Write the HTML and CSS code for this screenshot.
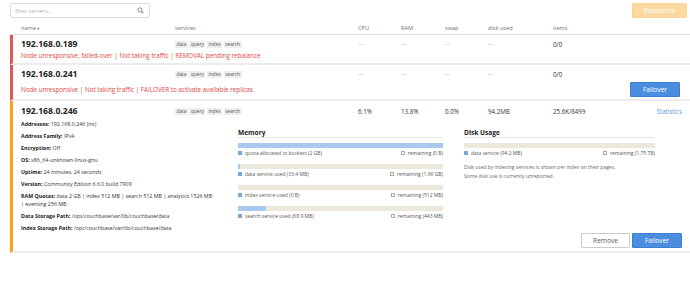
FILE: index.html
```html
<!DOCTYPE html>
<html>
<head>
<meta charset="utf-8">
<link rel="stylesheet" href="styles.css">
</head>
<body>
<div class="page">
  <div class="topbar">
    <div class="filter">
      <span class="ph">filter servers...</span>
      <svg class="search" width="7" height="7" viewBox="0 0 10 10"><circle cx="4.2" cy="4.2" r="3" fill="none" stroke="#888" stroke-width="1.4"/><line x1="6.4" y1="6.4" x2="9" y2="9" stroke="#888" stroke-width="1.6"/></svg>
    </div>
    <button class="btn rebalance">Rebalance</button>
  </div>

  <div class="thead grid">
    <span>name <span class="caret">&#9662;</span></span>
    <span>services</span>
    <span>CPU</span>
    <span>RAM</span>
    <span>swap</span>
    <span>disk used</span>
    <span>items</span>
    <span></span>
  </div>

  <div class="node failed">
    <div class="grid line1">
      <span class="ip">192.168.0.189</span>
      <span class="tags"><i>data</i><i>query</i><i>index</i><i>search</i></span>
      <span class="dash">---</span>
      <span class="dash">---</span>
      <span class="dash">---</span>
      <span class="dash">---</span>
      <span class="val">0/0</span>
      <span></span>
    </div>
    <div class="msg">Node unresponsive, failed-over | Not taking traffic | REMOVAL pending rebalance</div>
  </div>

  <div class="node failed">
    <div class="grid line1">
      <span class="ip">192.168.0.241</span>
      <span class="tags"><i>data</i><i>query</i><i>index</i><i>search</i></span>
      <span class="dash">---</span>
      <span class="dash">---</span>
      <span class="dash">---</span>
      <span class="dash">---</span>
      <span class="val">0/0</span>
      <span></span>
    </div>
    <div class="msgrow">
      <div class="msg">Node unresponsive | Not taking traffic | FAILOVER to activate available replicas</div>
      <button class="btn primary">Failover</button>
    </div>
  </div>

  <div class="node warn">
    <div class="grid line1">
      <span class="ip">192.168.0.246</span>
      <span class="tags"><i>data</i><i>query</i><i>index</i><i>search</i></span>
      <span class="val">6.1%</span>
      <span class="val">13.8%</span>
      <span class="val">0.0%</span>
      <span class="val">94.2MB</span>
      <span class="val">25.6K/8499</span>
      <span class="stats">Statistics</span>
    </div>
    <div class="panels">
      <div class="details">
        <p><b>Addresses:</b> 192.168.0.246 (int)</p>
        <p><b>Address Family:</b> IPv4</p>
        <p><b>Encryption:</b> Off</p>
        <p><b>OS:</b> x86_64-unknown-linux-gnu</p>
        <p><b>Uptime:</b> 24 minutes, 24 seconds</p>
        <p><b>Version:</b> Community Edition 6.6.0 build 7909</p>
        <p><b>RAM Quotas:</b> data 2 GB | index 512 MB | search 512 MB | analytics 1526 MB | eventing 256 MB</p>
        <p><b>Data Storage Path:</b> /opt/couchbase/var/lib/couchbase/data</p>
        <p><b>Index Storage Path:</b> /opt/couchbase/var/lib/couchbase/data</p>
      </div>
      <div class="usage">
        <h4>Memory</h4>
        <div class="bar"><div class="fill" style="width:100%"></div></div>
        <div class="legend"><span><i class="sq used"></i>quota allocated to buckets (2 GB)</span><span><i class="sq"></i>remaining (0 B)</span></div>
        <div class="bar"><div class="fill" style="width:0.8%"></div></div>
        <div class="legend"><span><i class="sq used"></i>data service used (33.4 MB)</span><span><i class="sq"></i>remaining (1.96 GB)</span></div>
        <div class="bar"><div class="fill" style="width:0%"></div></div>
        <div class="legend"><span><i class="sq used"></i>index service used (0 B)</span><span><i class="sq"></i>remaining (512 MB)</span></div>
        <div class="bar"><div class="fill" style="width:13.5%"></div></div>
        <div class="legend"><span><i class="sq used"></i>search service used (68.9 MB)</span><span><i class="sq"></i>remaining (443 MB)</span></div>
      </div>
      <div class="usage">
        <h4>Disk Usage</h4>
        <div class="bar"><div class="fill" style="width:0%"></div></div>
        <div class="legend"><span><i class="sq used"></i>data service (94.2 MB)</span><span><i class="sq"></i>remaining (1.75 TB)</span></div>
        <p class="note">Disk used by indexing services is shown per index on their pages.<br>Some disk use is currently unreported.</p>
      </div>
    </div>
    <div class="actions">
      <button class="btn plain">Remove</button>
      <button class="btn primary">Failover</button>
    </div>
  </div>
</div>
</body>
</html>
```

FILE: styles.css
```css
* { box-sizing: border-box; }
body {
  margin: 0;
  font-family: "Open Sans", "DejaVu Sans", sans-serif;
  color: #333;
  background: #fff;
}
.page { padding: 3px 0 0 10px; }

.topbar {
  display: flex;
  justify-content: space-between;
  align-items: flex-start;
  height: 19px;
  padding-right: 3px;
}
.filter {
  width: 140px;
  height: 15px;
  border: 1px solid #ddd;
  border-radius: 2px;
  display: flex;
  align-items: center;
  justify-content: space-between;
  padding: 0 5px 0 4px;
  font-size: 5.6px;
  color: #b0b0b0;
}
.search { display: block; }

.btn {
  font-family: "Open Sans", sans-serif;
  font-size: 6.6px;
  height: 15px;
  padding: 0;
  border-radius: 1px;
  cursor: pointer;
}
.rebalance {
  width: 55px;
  background: #fdd9a0;
  border: 1px solid #fcd498;
  color: #fff;
}
.primary {
  width: 50px;
  background: #4b8ee0;
  border: 1px solid #3b7fd4;
  color: #fff;
}
.plain {
  width: 49px;
  background: #fff;
  border: 1px solid #ccc;
  color: #555;
}

.grid {
  display: grid;
  grid-template-columns: 154px 183px 43px 44px 43px 65px 1fr auto;
  align-items: center;
}
.thead {
  height: 13px;
  padding: 0 10px 0 11px;
  border-bottom: 1px solid #dedede;
  font-size: 5.6px;
  color: #6f6f6f;
}
.thead span { color: #6f6f6f; }
.caret { font-size: 4px; color: #555 !important; }

.node {
  border-left: 3px solid #e05858;
  border-bottom: 2px solid #ececec;
  padding: 3px 10px 2px 8px;
}
.node.warn { border-left-color: #f6a31f; padding: 4px 8px 3px 8px; }
.line1 { height: 10px; }
.ip { font-weight: 700; font-size: 8.6px; color: #222; }
.tags { display: flex; gap: 1.5px; }
.tags i {
  font-style: normal;
  font-size: 4.8px;
  background: #eee;
  color: #555;
  padding: 0 1.5px;
  line-height: 7px;
}
.dash { font-size: 5.4px; color: #999; }
.val { font-size: 6.2px; color: #333; }
.stats { font-size: 6.2px; color: #5a9bdc; justify-self: end; }

.msg {
  font-size: 6.3px;
  color: #e24545;
  line-height: 10px;
  margin-top: 3px;
}
.msgrow {
  display: flex;
  justify-content: space-between;
  align-items: center;
  margin-top: 4px;
}
.msgrow .msg { margin-top: 0; }

.panels {
  display: grid;
  grid-template-columns: 209px 205px 204px;
  column-gap: 8px;
  margin-top: 5px;
}
.panels .usage:last-child { margin-left: 13px; }
.details p {
  margin: 0 0 4px;
  max-width: 192px;
  font-size: 5.3px;
  line-height: 8px;
  color: #333;
}
.details p:last-child { margin-bottom: 0; }
.details b { font-weight: 700; color: #222; }

.usage { padding-top: 8px; }
.usage h4 {
  margin: 0;
  font-size: 6.6px;
  font-weight: 700;
  line-height: 9px;
  color: #222;
  border-bottom: 1px solid #e6e6e6;
}
.bar {
  height: 5px;
  background: #ede8dc;
  margin-top: 7px;
}
.usage h4 + .bar { margin-top: 5px; }
.fill { height: 100%; background: #a9c9ee; }
.legend {
  display: flex;
  justify-content: space-between;
  margin-top: 1px;
  font-size: 5px;
  line-height: 8px;
  color: #555;
}
.legend span { display: flex; align-items: center; }
.sq {
  display: inline-block;
  width: 4px;
  height: 4px;
  border: 0.5px solid #aaa;
  background: #fff;
  margin-right: 3px;
}
.sq.used { background: #7aa6dc; border-color: #7aa6dc; }
.note {
  margin: 6px 0 0;
  font-size: 5px;
  line-height: 9px;
  color: #666;
}

.actions {
  display: flex;
  justify-content: flex-end;
  gap: 2px;
  margin-top: 1px;
}
```
